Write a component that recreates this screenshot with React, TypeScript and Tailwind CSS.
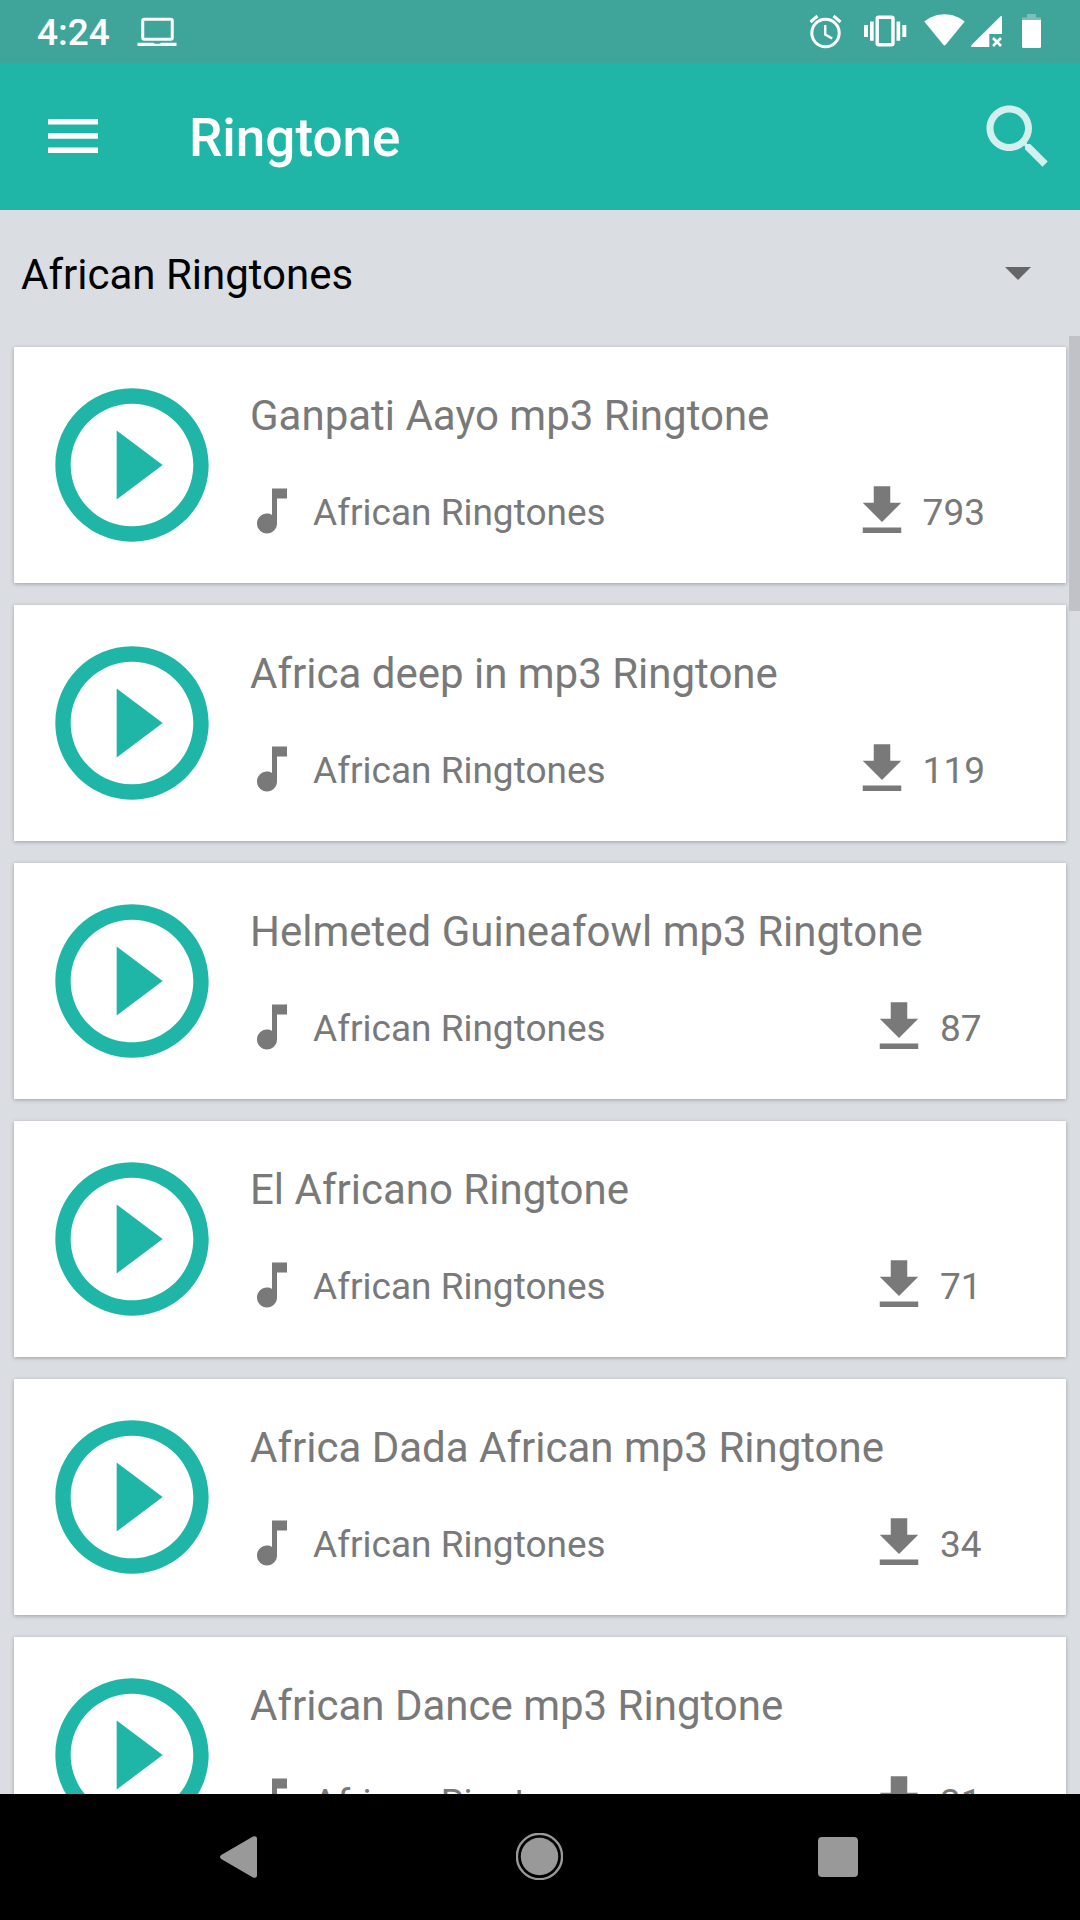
import { useState } from 'react'

type Ringtone = {
    title: string
    category: string
    downloads: number
}

const ringtones: Ringtone[] = [
    { title: 'Ganpati Aayo mp3 Ringtone', category: 'African Ringtones', downloads: 793 },
    { title: 'Africa deep in mp3 Ringtone', category: 'African Ringtones', downloads: 119 },
    { title: 'Helmeted Guineafowl mp3 Ringtone', category: 'African Ringtones', downloads: 87 },
    { title: 'El Africano Ringtone', category: 'African Ringtones', downloads: 71 },
    { title: 'Africa Dada African mp3 Ringtone', category: 'African Ringtones', downloads: 34 },
    { title: 'African Dance mp3 Ringtone', category: 'African Ringtones', downloads: 31 },
]

function StatusBar() {
    return (
        <div className="flex h-[63px] shrink-0 items-start justify-between bg-[#3fa59a] text-white">
            <div className="flex items-start pl-[37px]">
                <span className="mt-[11px] text-[37px] leading-[43px] font-medium">4:24</span>
                {/* Laptop */}
                <svg className="mt-4 ml-[27px] h-8 w-10" viewBox="0 0 40 32" fill="none">
                    <rect x="5.75" y="3.25" width="29.5" height="20" rx="1.5" stroke="currentColor" strokeWidth="3" />
                    <path d="M0.5 26.8h16l1.2 1h5l1.2-1h15.6v3.2H0.5z" fill="currentColor" />
                </svg>
            </div>
            <svg className="h-[63px] w-[300px]" viewBox="0 0 300 63" fill="currentColor">
                {/* Alarm */}
                <circle cx="45.5" cy="33" r="13.7" fill="none" stroke="currentColor" strokeWidth="3" />
                <path d="M45.2 25v9.5l7 4" fill="none" stroke="currentColor" strokeWidth="2.4" />
                <path d="M30.5 22l7-6M60.5 22l-7-6" stroke="currentColor" strokeWidth="3" />
                {/* Vibrate */}
                <rect x="97.2" y="17.2" width="15.8" height="27.6" rx="1.5" fill="none" stroke="currentColor" strokeWidth="3.4" />
                <path d="M84 25h4v12h-4zM90 21.5h3.7v19.3H90zM116.5 21.5h3.7v19.3h-3.7zM122.3 25h4v12h-4z" />
                {/* Wifi */}
                <path d="M144.3 21.5C150 17 157 14.2 164.5 14.2S179 17 184.7 21.5L165.7 44.8q-1.2 1.4-2.4 0z" />
                {/* Signal */}
                <path d="M191.5 47q-1-.6 0-2L220.6 16.2q1.4-.6 1.4 1V34h-12.7v13z" />
                <path d="M213 38l8 8M221 38l-8 8" stroke="currentColor" strokeWidth="2.6" />
                {/* Battery */}
                <path d="M247 14h9v3.5h5v2.5h-19v-2.5h5z" opacity=".3" />
                <path d="M242 20h19v26.5q0 1.5-1.5 1.5h-16q-1.5 0-1.5-1.5z" />
            </svg>
        </div>
    )
}

function Toolbar() {
    return (
        <header className="flex h-[147px] shrink-0 items-center bg-[#20b6a7] pr-5 pl-12 text-white">
            <button type="button" aria-label="Menu" className="mb-0.5">
                <svg className="h-[34px] w-[50px]" viewBox="0 0 50 34" fill="currentColor">
                    <path d="M0 0h50v5.5H0zM0 14.2h50v5.5H0zM0 28.4h50V34H0z" />
                </svg>
            </button>
            <h1 className="mt-[3px] ml-[91px] flex-1 text-[53px] leading-[62px] font-medium">Ringtone</h1>
            <button type="button" aria-label="Search">
                <svg className="h-[84px] w-[84px] text-[#d2f0ed]" viewBox="0 0 24 24" fill="currentColor">
                    <path d="M15.5 14h-.79l-.28-.27C15.41 12.59 16 11.11 16 9.5 16 5.91 13.09 3 9.5 3S3 5.91 3 9.5 5.91 16 9.5 16c1.61 0 3.09-.59 4.23-1.57l.27.28v.79l5 4.99L20.49 19l-4.99-5zm-6 0C7.01 14 5 11.99 5 9.5S7.01 5 9.5 5 14 7.01 14 9.5 11.99 14 9.5 14z" />
                </svg>
            </button>
        </header>
    )
}

function RingtoneCard({ ringtone }: { ringtone: Ringtone }) {
    return (
        <div className="flex h-[236px] shrink-0 items-center bg-white pl-[26px] text-[#797979] shadow-[0_1px_4px_rgba(0,0,0,0.28)]">
            <svg className="mb-px h-[184px] w-[184px] shrink-0 text-[#20b6a7]" viewBox="0 0 24 24" fill="currentColor">
                <path d="M10 16.5l6-4.5-6-4.5v9zM12 2C6.48 2 2 6.48 2 12s4.48 10 10 10 10-4.48 10-10S17.52 2 12 2zm0 18c-4.41 0-8-3.59-8-8s3.59-8 8-8 8 3.59 8 8-3.59 8-8 8z" />
            </svg>
            <div className="flex h-full flex-1 flex-col pt-11 pr-[81px] pl-[26px]">
                <div className="text-[42px] leading-[50px] whitespace-nowrap">{ringtone.title}</div>
                <div className="mt-[37px] -ml-2 flex h-[66px] items-center">
                    <svg className="h-[60px] w-[60px]" viewBox="0 0 24 24" fill="currentColor">
                        <path d="M12 3v10.55c-.59-.34-1.27-.55-2-.55-2.21 0-4 1.79-4 4s1.79 4 4 4 4-1.79 4-4V7h4V3h-6z" />
                    </svg>
                    <span className="mt-[3px] ml-[11px] flex-1 text-[37px] leading-[43px]">{ringtone.category}</span>
                    <svg className="h-[66px] w-[66px]" viewBox="0 0 24 24" fill="currentColor">
                        <path d="M19 9h-4V3H9v6H5l7 7 7-7zM5 18v2h14v-2H5z" />
                    </svg>
                    <span className="mt-[3px] ml-2 min-w-[45px] text-[37px] leading-[43px]">{ringtone.downloads}</span>
                </div>
            </div>
        </div>
    )
}

function NavBar() {
    return (
        <nav className="flex h-[126px] shrink-0 items-center bg-black pl-[220px] text-[#999999]">
            <svg className="h-[42px] w-[37px]" viewBox="0 0 37 42" fill="currentColor">
                <path d="M1.2 19L33 .6Q37-.8 37 3v36q0 3.8-4 2.4L1.2 23q-2.4-2 0-4z" />
            </svg>
            <svg className="mb-px ml-[259px] h-[47px] w-[47px]" viewBox="0 0 47 47" fill="currentColor">
                <circle cx="23.5" cy="23.5" r="22.6" fill="none" stroke="currentColor" strokeWidth="2.4" />
                <circle cx="23.5" cy="23.5" r="18.7" />
            </svg>
            <div className="ml-[255px] h-10 w-10 rounded bg-[#999999]" />
        </nav>
    )
}

export default function App() {
    const [category] = useState('African Ringtones')

    return (
        <div className="relative flex h-[1920px] w-[1080px] flex-col overflow-hidden bg-[#dadde2] font-[Roboto,sans-serif]">
            <StatusBar />
            <Toolbar />

            {/* Category picker */}
            <div className="flex h-[126px] shrink-0 items-center justify-between pr-[49px] pl-[21px]">
                <span className="mt-1 text-[42px] leading-[50px] text-black">{category}</span>
                <svg className="h-[13px] w-[26px] text-[#646668]" viewBox="0 0 26 13" fill="currentColor">
                    <path d="M0 0h26L13 13z" />
                </svg>
            </div>

            {/* List */}
            <main className="flex min-h-0 flex-1 flex-col gap-[22px] overflow-hidden px-3.5 pt-[11px]">
                {ringtones.map(r => (
                    <RingtoneCard key={r.title} ringtone={r} />
                ))}
            </main>
            <div className="absolute top-[336px] right-0 h-[275px] w-[11px] bg-[#c0c2c8]" />

            <NavBar />
        </div>
    )
}
